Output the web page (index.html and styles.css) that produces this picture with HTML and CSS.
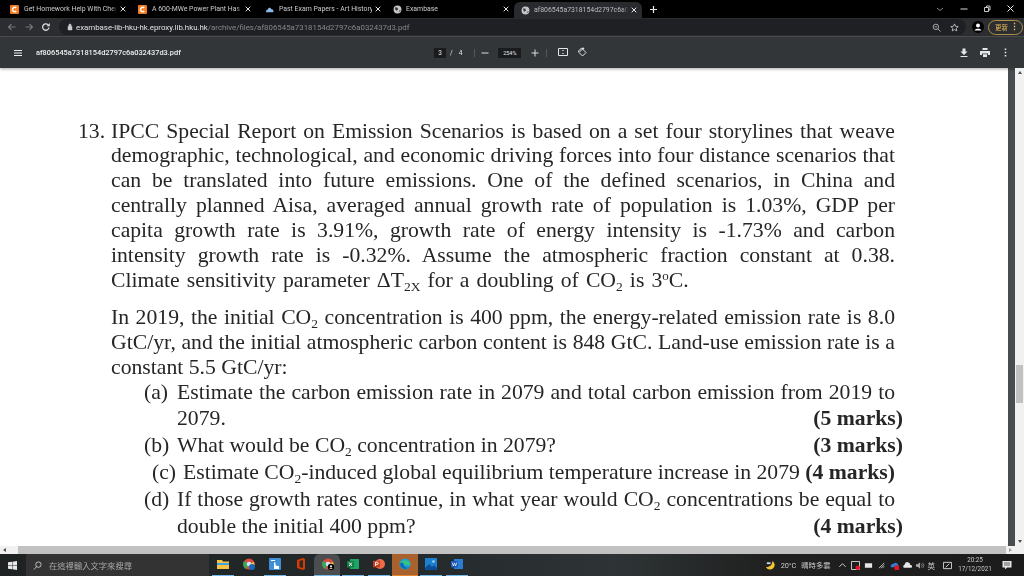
FILE: index.html
```html
<!DOCTYPE html>
<html lang="en">
<head>
<meta charset="utf-8">
<title>PDF</title>
<link rel="stylesheet" href="styles.css">
</head>
<body>
<div class="tabs">
  <div class="tab t1"><svg class="fav" viewBox="0 0 8 8"><rect width="8" height="8" rx="1" fill="#f47a20"/><path d="M5.600 2.600A2 2 0 1 0 5.600 5.400" fill="none" stroke="#fff" stroke-width="1.300"/></svg><span class="tab-title">Get Homework Help With Chegg</span><svg class="x" viewBox="0 0 6 6"><path d="M.7.700l4.600 4.600M5.300.700L.7 5.300" stroke="#e4e6e9" stroke-width="1"/></svg></div>
  <div class="tab t2"><svg class="fav" viewBox="0 0 8 8"><rect width="8" height="8" rx="1" fill="#f47a20"/><path d="M5.600 2.600A2 2 0 1 0 5.600 5.400" fill="none" stroke="#fff" stroke-width="1.300"/></svg><span class="tab-title">A 600-MWe Power Plant Has An</span><svg class="x" viewBox="0 0 6 6"><path d="M.7.700l4.600 4.600M5.300.700L.7 5.300" stroke="#e4e6e9" stroke-width="1"/></svg></div>
  <div class="tab t3"><svg class="fav" viewBox="0 0 8 8"><path d="M1 6.500h6.400C8 5 7 3.600 5.800 3.800 5 1.800 2.800 2 2.500 4 1.300 4 .6 5.300 1 6.500z" fill="#8ab9e8"/></svg><span class="tab-title">Past Exam Papers - Art History</span><svg class="x" viewBox="0 0 6 6"><path d="M.7.700l4.600 4.600M5.300.700L.7 5.300" stroke="#e4e6e9" stroke-width="1"/></svg></div>
  <div class="tab t4"><svg class="fav" viewBox="0 0 8 8"><circle cx="4" cy="4" r="3.500" fill="#c4c7c9"/><path d="M2 2l2 .5.500 1.500-1.500 1L2 4zM5 5.500l1.500-1V6z" fill="#333"/></svg><span class="tab-title">Exambase</span><svg class="x" viewBox="0 0 6 6"><path d="M.7.700l4.600 4.600M5.300.700L.7 5.300" stroke="#e4e6e9" stroke-width="1"/></svg></div>
  <div class="tab active"><svg class="fav" viewBox="0 0 8 8"><circle cx="4" cy="4" r="3.500" fill="#c4c7c9"/><path d="M2 2l2 .5.500 1.500-1.500 1L2 4zM5 5.500l1.500-1V6z" fill="#444"/></svg><span class="tab-title">af806545a7318154d2797c6a032437d3</span><svg class="x" viewBox="0 0 6 6"><path d="M.7.700l4.600 4.600M5.300.700L.7 5.300" stroke="#e4e6e9" stroke-width="1"/></svg></div>
  <svg class="plus" viewBox="0 0 7 7"><path d="M3.500 0v7M0 3.500h7" stroke="#e8eaed" stroke-width="1.200"/></svg>
  <div class="win">
    <svg viewBox="0 0 10 10"><path d="M2 4l3 2.500L8 4" fill="none" stroke="#8a8a8a"/></svg>
    <svg viewBox="0 0 10 10"><path d="M1.500 5h7" stroke="#ddd"/></svg>
    <svg viewBox="0 0 10 10"><path d="M2.500 3.500h4v4h-4zM4.500 3.500v-1.500h3.500v4H6.500" fill="none" stroke="#ddd" stroke-width=".9"/></svg>
    <svg viewBox="0 0 10 10"><path d="M1.500 1.500l6 6M7.500 1.500l-6 6" stroke="#eee"/></svg>
  </div>
</div>
<div class="omni">
  <svg class="nav" viewBox="0 0 10 10"><path d="M8.500 5h-7M4.500 2L1.500 5l3 3" fill="none" stroke="#74777b" stroke-width="1.100"/></svg>
  <svg class="nav" viewBox="0 0 10 10"><path d="M1.500 5h7M5.500 2l3 3-3 3" fill="none" stroke="#74777b" stroke-width="1.100"/></svg>
  <svg class="nav" viewBox="0 0 10 10"><path d="M8 5.500A3.200 3.200 0 1 1 7 2.700" fill="none" stroke="#dadce0" stroke-width="1.300"/><path d="M8.800 1v3.200H5.600z" fill="#dadce0"/></svg>
  <div class="addr">
    <svg class="lock" viewBox="0 0 8 8"><path d="M2 3.500h4V7H2zM2.800 3.500V2.200a1.200 1.200 0 0 1 2.400 0v1.300" fill="#c8cbcf" stroke="#c8cbcf" stroke-width=".5" fill-rule="evenodd"/></svg>
    <span class="url"><b>exambase-lib-hku-hk.eproxy.lib.hku.hk</b>/archive/files/af806545a7318154d2797c6a032437d3.pdf</span>
    <svg class="addr-ico" viewBox="0 0 10 10"><circle cx="4.300" cy="4.300" r="3" fill="none" stroke="#b5b8bb"/><path d="M6.500 6.500l3 3M3 4.300h2.600" stroke="#b5b8bb"/></svg>
    <svg class="addr-ico" viewBox="0 0 10 10"><path d="M5 1l1.200 2.700 2.900.3-2.200 1.900.7 2.900L5 7.300 2.400 8.800l.7-2.900L.9 4l2.900-.3z" fill="none" stroke="#c8cbcf" stroke-width=".9"/></svg>
  </div>
  <svg class="avatar" viewBox="0 0 12 12"><circle cx="6" cy="6" r="6" fill="#000"/><circle cx="6" cy="4.500" r="2" fill="#fff"/><path d="M2.500 9.500c.5-2.500 6.500-2.500 7 0z" fill="#fff"/></svg>
  <div class="update"><span>更新</span><i>⋮</i></div>
</div>
<div class="pdfbar">
  <svg class="menu" viewBox="0 0 8 6"><path d="M0 .5h8M0 3h8M0 5.500h8" stroke="#eee"/></svg>
  <span class="doc">af806545a7318154d2797c6a032437d3.pdf</span>
  <div class="center">
    <span class="box">3</span><span class="slash">/</span><span class="total">4</span><span class="sep"></span>
    <svg class="z minus" viewBox="0 0 8 8"><path d="M.5 4h7" stroke="#dcdde0"/></svg>
    <span class="box zoom">254%</span>
    <svg class="z" viewBox="0 0 8 8"><path d="M.5 4h7M4 .5v7" stroke="#dcdde0"/></svg>
    <span class="sep second-sep"></span>
    <svg class="fit" viewBox="0 0 11 9"><path d="M.5.500h9v7h-9z" fill="none" stroke="#e4e5e7"/><path d="M5 2v1M5 5v1" stroke="#e4e5e7" stroke-width="1.200"/></svg>
    <svg class="rot" viewBox="0 0 11 11"><path d="M5.500 2l3.500 3.500-3.500 3.500L2 5.500z" fill="none" stroke="#e4e5e7"/><path d="M1.500 5A4 4 0 0 1 6 1.500" fill="none" stroke="#e4e5e7"/><path d="M5.500 0v3l2-1.500z" fill="#e4e5e7"/></svg>
  </div>
  <div class="tools">
    <svg viewBox="0 0 9 9"><path d="M3 .5h3v3h2L4.500 7 1 3.500h2zM1 8h7v1H1z" fill="#e4e5e7"/></svg>
    <svg viewBox="0 0 10 9"><path d="M2.500 0h5v2h-5zM0 3h10v4H8V5.500H2V7H0zM3 6.200h4V9H3z" fill="#e4e5e7"/></svg>
    <svg viewBox="0 0 3 9"><path d="M.7.500h1.600v1.600H.7zM.7 3.700h1.600v1.600H.7zM.7 6.900h1.600v1.600H.7z" fill="#e4e5e7"/></svg>
  </div>
</div>
<div class="viewer">
  <main class="page">
    <div class="para first">
      <div class="line labelled wide"><span class="n">13.</span><span class="fill">IPCC Special Report on Emission Scenarios is based on a set four storylines that weave</span></div>
      <div class="line">demographic, technological, and economic driving forces into four distance scenarios that</div>
      <div class="line">can be translated into future emissions. One of the defined scenarios, in China and</div>
      <div class="line">centrally planned Aisa, averaged annual growth rate of population is 1.03%, GDP per</div>
      <div class="line">capita growth rate is 3.91%, growth rate of energy intensity is -1.73% and carbon</div>
      <div class="line">intensity growth rate is -0.32%. Assume the atmospheric fraction constant at 0.38.</div>
      <div class="line free spaced">Climate sensitivity parameter ΔT<sub>2X</sub> for a doubling of CO<sub>2</sub> is 3<sup>o</sup>C.</div>
    </div>
    <div class="para second">
      <div class="line">In 2019, the initial CO<sub>2</sub> concentration is 400 ppm, the energy-related emission rate is 8.0</div>
      <div class="line">GtC/yr, and the initial atmospheric carbon content is 848 GtC. Land-use emission rate is a</div>
      <div class="line free">constant 5.5 GtC/yr:</div>
    </div>
    <div class="items">
      <div class="line labelled item"><span class="n">(a)</span><span class="fill">Estimate the carbon emission rate in 2079 and total carbon emission from 2019 to</span></div>
      <div class="row cont"><span>2079.</span><b>(5 marks)</b></div>
      <div class="row item"><span class="n">(b)</span><span class="grow">What would be CO<sub>2</sub> concentration in 2079?</span><b>(3 marks)</b></div>
      <div class="row item tight"><span class="n">(c)</span><span class="grow">Estimate CO<sub>2</sub>-induced global equilibrium temperature increase in 2079 <b>(4 marks)</b></span></div>
      <div class="line labelled item"><span class="n">(d)</span><span class="fill">If those growth rates continue, in what year would CO<sub>2</sub> concentrations be equal to</span></div>
      <div class="row cont"><span>double the initial 400 ppm?</span><b>(4 marks)</b></div>
    </div>
  </main>
  <div class="gutter"></div>
  <div class="vscroll"><i class="up"></i><i class="thumb"></i><i class="down"></i></div>
</div>
<div class="hscroll"><i class="left"></i><i class="hthumb"></i><i class="right"></i></div>
<footer class="taskbar">
  <svg class="start" viewBox="0 0 10 10"><path d="M0 1.500l4.500-.7v4H0zM5 .7L10 0v4.800H5zM0 5.200h4.500v4L0 8.500zM5 5.200h5V10l-5-.7z" fill="#e8e8e8"/></svg>
  <div class="search"><svg viewBox="0 0 10 10"><circle cx="6" cy="4" r="3" fill="none" stroke="#ccc"/><path d="M4 6.200L1 9.500" stroke="#ccc"/></svg><span>在這裡輸入文字來搜尋</span></div>
  <div class="apps">
    <span class="app open"><svg viewBox="0 0 12 12"><path d="M0 2h5l1 1.500h6V11H0z" fill="#f5c242"/><path d="M0 5h12v2H0z" fill="#3ba4e8"/></svg></span>
    <span class="app"><svg viewBox="0 0 12 12"><circle cx="6" cy="6" r="5.500" fill="#dd4b3e"/><path d="M6 6l5-2a5.500 5.500 0 0 1-4 7.500z" fill="#f6c33b"/><path d="M6 6L3 11A5.500 5.500 0 0 1 1 3z" fill="#3aa757"/><circle cx="6" cy="6" r="2.300" fill="#cfe3fb"/><circle cx="9" cy="9" r="3" fill="#1668b8"/></svg></span>
    <span class="app open"><svg viewBox="0 0 12 12"><rect width="12" height="12" rx="1" fill="#3f8ed8"/><path d="M5 11V4.500h1.500v3L10 8v3zM2 2h4v1H2z" fill="#fff"/></svg></span>
    <span class="app"><svg viewBox="0 0 12 12"><path d="M2 2l6-2 2 1v10l-2 1-6-2z" fill="#d83b01"/><path d="M4.500 3L8 2v8L4.500 9z" fill="#2b2b2b"/></svg></span>
    <span class="app active"><svg viewBox="0 0 12 12"><circle cx="6" cy="6" r="5.500" fill="#dd4b3e"/><path d="M6 6l5-2a5.500 5.500 0 0 1-4 7.500z" fill="#f6c33b"/><path d="M6 6L3 11A5.500 5.500 0 0 1 1 3z" fill="#3aa757"/><circle cx="6" cy="6" r="2.300" fill="#cfe3fb"/><circle cx="9" cy="9" r="3.200" fill="#000"/><circle cx="9" cy="8.200" r="1" fill="#fff"/><path d="M7.300 10.800c.4-1.500 3-1.500 3.400 0z" fill="#fff"/></svg></span>
    <span class="app open"><svg viewBox="0 0 12 12"><rect x="3" y="1" width="9" height="10" fill="#21a366"/><rect y="3" width="7" height="6.500" fill="#107c41"/><path d="M2 4.500l3 3.500M5 4.500L2 8" stroke="#fff"/></svg></span>
    <span class="app open"><svg viewBox="0 0 12 12"><circle cx="7" cy="6" r="5" fill="#ed6c47"/><rect y="2.800" width="7" height="6.500" fill="#c43e1c"/><path d="M2.500 8V4.200h1.700a1 1 0 0 1 0 2.200H2.500" fill="none" stroke="#fff" stroke-width=".9"/></svg></span>
    <span class="app edge"><svg viewBox="0 0 12 12"><circle cx="6" cy="6" r="5.500" fill="#1b9de2"/><path d="M.8 6C1.500 1 11 1 11.500 7H5c0 2 3 3 5.500 2A5.500 5.500 0 0 1 .8 6z" fill="#33c481"/><path d="M.8 6C2 3.500 5 4 5 7c0 2 3 3 5.500 2A5.500 5.500 0 0 1 .8 6z" fill="#0f6cbd"/></svg></span>
    <span class="app open"><svg viewBox="0 0 12 12"><rect width="12" height="12" fill="#1c7fd0"/><path d="M0 10l4-4 3 3 2-2 3 3v2H0z" fill="#0c4f99"/><circle cx="8.500" cy="3.500" r="1.300" fill="#9fd3f7"/></svg></span>
    <span class="app open"><svg viewBox="0 0 12 12"><rect x="3" y="1" width="9" height="10" fill="#2b7cd3"/><rect y="3" width="7" height="6.500" fill="#185abd"/><path d="M1.200 4.500L2.400 8l1.100-3 1.100 3 1.200-3.500" fill="none" stroke="#fff" stroke-width=".7"/></svg></span>
  </div>
  <div class="tray">
    <svg class="moon" viewBox="0 0 12 12"><path d="M8 1a5 5 0 1 1-7 6.500C5 8 8 5.500 8 1z" fill="#f6c431"/><path d="M2 2.500h4v2H2z" fill="#cfd8e0"/></svg>
    <span class="temp">20°C</span><span class="wx">晴時多雲</span>
    <svg class="ti chev" viewBox="0 0 10 10"><path d="M1.500 6.500L5 3l3.500 3.500" fill="none" stroke="#ddd"/></svg>
    <svg class="ti" viewBox="0 0 10 10"><path d="M.5.500h9v9h-9z" fill="none" stroke="#ddd"/><circle cx="7.500" cy="7.500" r="2.500" fill="#e81123"/></svg>
    <svg class="ti" viewBox="0 0 10 10"><path d="M1 2.500h8v5H1z" fill="#e6e6e6"/></svg>
    <svg class="ti" viewBox="0 0 10 10"><path d="M2 8L8 2M4 8l4-4M6 8l2-2" stroke="#bbb"/></svg>
    <svg class="ti" viewBox="0 0 10 10"><path d="M1 7a3 3 0 0 1 3-4 3 3 0 0 1 5 3v1z" fill="#2f7fd6"/><rect x="5" y="5" width="5" height="5" fill="#e81123"/></svg>
    <svg class="ti" viewBox="0 0 10 10"><path d="M1 7.500a2 2 0 0 1 1-3.500 3 3 0 0 1 6 .5 1.500 1.500 0 0 1 1 3z" fill="#e6e6e6"/></svg>
    <svg class="ti" viewBox="0 0 10 10"><path d="M0 3.500h2L4.500 1.500v7L2 6.500H0z" fill="#aaa"/><path d="M6 3a3 3 0 0 1 0 4M7.500 2a4.500 4.500 0 0 1 0 6" fill="none" stroke="#aaa" stroke-width=".7"/></svg>
    <span class="lang">英</span>
    <svg class="ti screen" viewBox="0 0 10 10"><path d="M.5 1.500h9v7h-9z" fill="none" stroke="#ddd"/><path d="M3 7l4-4" stroke="#ddd"/></svg>
    <div class="clock"><span>20:25</span><span>17/12/2021</span></div>
    <svg class="notif" viewBox="0 0 10 10"><path d="M.5 1h9v6.500H5L3 9.500v-2H.500z" fill="#e6e6e6"/><path d="M2 3h6M2 5h6" stroke="#222" stroke-width=".7"/></svg>
  </div>
</footer>
</body>
</html>
```

FILE: styles.css
```css
* { box-sizing: border-box; }
html, body { margin: 0; height: 100%; overflow: hidden; }
body { width: 1024px; height: 576px; display: flex; flex-direction: column; font-family: Roboto, "Noto Sans CJK TC", sans-serif; background: #fff; }
svg { display: block; flex: none; }
.tabs, .omni, .pdfbar, .taskbar { filter: blur(.35px); }
.page { filter: blur(.25px); }

.tabs { height: 18px; background: #000; display: flex; align-items: center; color: #c9cbce; font-size: 6.900px; padding-left: 10px; }
.tab { height: 18px; display: flex; align-items: center; flex: none; padding-right: 5px; }
.tab-title { flex: 1; min-width: 0; overflow: hidden; white-space: nowrap; mask-image: linear-gradient(90deg, #000 94%, transparent); }
.fav { width: 9px; height: 9px; margin-right: 5px; }
.x { width: 6px; height: 6px; margin-left: 3px; }
.t1 { width: 121px; margin-right: 7px; }
.t2 { width: 118px; margin-right: 9px; }
.t3 { width: 120px; margin-right: 8px; padding-right: 4px; }
.t3 .tab-title, .t4 .tab-title { mask-image: none; }
.t4 { width: 120px; padding-right: 4px; }
.t4 .fav { margin-right: 4px; }
.active { width: 128px; margin-left: 1px; padding: 0 5px 0 7px; background: #292a2d; border-radius: 6px 6px 0 0; color: #b9bcc0; height: 16px; align-self: flex-end; }
.active .fav { margin-right: 4px; }
.plus { width: 7px; height: 7px; margin-left: 8px; }
.win { margin-left: auto; width: 81px; margin-right: 8px; display: flex; justify-content: space-between; }
.win svg { width: 10px; height: 10px; }

.omni { height: 19px; background: #2c2d30; display: flex; align-items: center; padding-left: 7px; border-bottom: 1px solid #4e5053; }
.nav { width: 10px; height: 10px; margin-right: 7px; }
.addr { flex: 1; height: 16px; border-radius: 8px; background: #1f2023; display: flex; align-items: center; padding: 0 7px 0 7px; margin-left: 1px; }
.lock { width: 8px; height: 8px; margin-right: 2px; }
.url { flex: 1; font-size: 7.850px; color: #85888c; white-space: nowrap; overflow: hidden; }
.url b { color: #dfe1e5; font-weight: 400; }
.addr-ico { width: 9px; height: 9px; margin-left: 9px; }
.avatar { width: 12px; height: 12px; margin-left: 6px; }
.update { width: 35px; height: 15px; margin: 0 1px 0 4px; border: 1px solid #b0904a; border-radius: 8px; color: #e7b95d; font-size: 6.500px; display: flex; align-items: center; justify-content: space-between; padding: 0 3px 0 6px; }
.update i { font-style: normal; font-size: 9px; font-weight: 700; }

.pdfbar { height: 31px; background: #323639; display: flex; align-items: center; padding: 0 14px 0 14px; color: #f1f1f1; box-shadow: 0 1px 3px rgba(0,0,0,.35); position: relative; }
.menu { width: 8px; height: 6px; margin-right: 14px; }
.doc { font-size: 7.400px; font-weight: 500; width: 398px; white-space: nowrap; }
.center { display: flex; align-items: center; font-size: 6.500px; color: #e8eaed; }
.box { background: #191b1c; width: 12px; height: 10px; line-height: 10px; text-align: center; }
.slash { margin-left: 4px; }
.total { margin-left: 6px; }
.sep { width: 1px; height: 8px; background: #55585b; margin: 0 6px 0 12px; }
.z { width: 8px; height: 8px; }
.zoom { width: 23px; margin: 0 10px 0 9px; font-size: 5.500px; }
.second-sep { margin: 0 11px 0 7px; }
.fit { width: 11px; height: 9px; margin-right: 8px; }
.rot { width: 11px; height: 11px; }
.tools { margin-left: auto; display: flex; align-items: center; gap: 11px; }
.tools svg { height: 9px; width: 10px; }
.tools svg:last-child { width: 3px; margin-left: 3px; margin-right: 3px; }

.viewer { height: 478px; display: flex; background: #fff; }
.page { width: 1008px; padding: 50.500px 113px 0 78px; font: 21.700px/24.860px "Liberation Serif", serif; color: #262626; }
.line { text-align: justify; text-align-last: justify; padding-left: 33px; white-space: nowrap; height: 24.860px; }
.line.free { text-align-last: left; }
.spaced { word-spacing: 1.650px; }
.labelled { display: flex; }
.labelled.wide { padding-left: 0; }
.n { width: 33px; text-align-last: left; flex: none; }
.fill { flex: 1; text-align-last: justify; }
.grow { flex: 1; }
sub { font-size: 13.500px; line-height: 0; vertical-align: -4px; }
sup { font-size: 13px; line-height: 0; vertical-align: 7px; }
.second { margin-top: 12.500px; }
.items { margin-top: -1px; }
.items .line, .row { height: 26.900px; line-height: 26.900px; }
.line.item, .row.item { padding-left: 66px; }
.row { display: flex; justify-content: space-between; white-space: nowrap; margin-right: -8px; }
.row.cont { padding-left: 99px; }
.row b { font-weight: 700; }
.row.item.tight { padding-left: 74px; }
.tight .n { width: 31px; }

.gutter { width: 7px; background: #474c4f; }
.vscroll { width: 9px; background: #f1f1f1; position: relative; display: flex; flex-direction: column; align-items: center; }
.thumb { position: absolute; top: 297px; left: 1px; width: 7px; height: 38px; background: #c1c1c1; }
.up, .down { position: absolute; width: 0; height: 0; border: 2px solid transparent; }
.up { top: 3px; border-bottom: 3px solid #505050; border-top: 0; }
.down { bottom: 3px; border-top: 3px solid #505050; border-bottom: 0; }

.hscroll { height: 8px; background: #f1f1f1; position: relative; }
.hthumb { position: absolute; left: 18px; right: 18px; top: 0; bottom: 0; background: #c1c1c1; }
.left, .right { position: absolute; top: 2px; width: 0; height: 0; border: 2px solid transparent; }
.left { left: 3px; border-right: 3px solid #505050; border-left: 0; }
.right { right: 12px; border-left: 3px solid #a0a0a0; border-right: 0; }

.taskbar { height: 22px; background: linear-gradient(90deg, #1e2223 0, #24292b 40%, #2e3436 60%, #202020 75%, #1b1b1b 100%); display: flex; align-items: stretch; color: #c9c9c9; }
.start { width: 9px; height: 9px; margin: 7px 8px 0 8px; }
.search { width: 183px; background: #333; display: flex; align-items: center; padding-left: 7px; font-size: 8.300px; color: #a8a8a8; margin-left: 1px; }
.search svg { width: 9px; height: 9px; margin-right: 7px; }
.apps { display: flex; margin-left: 1px; }
.app { width: 22px; margin: 0 2px; height: 22px; display: flex; align-items: center; justify-content: center; border-bottom: 1px solid transparent; padding-bottom: 1px; }
.app svg { width: 12px; height: 12px; }
.app.open { border-bottom-color: #76b9ed; }
.app.active { width: 26px; margin: 0; background: #4b4d4f; border-bottom-color: #76b9ed; }
.app.edge { width: 26px; margin: 0; background: #a9622e; border-bottom-color: #e8862e; }
.tray { margin-left: auto; display: flex; align-items: center; font-size: 7.300px; }
.moon { width: 11px; height: 11px; margin-right: 5px; }
.temp { margin-right: 5px; }
.wx { margin-right: 7px; }
.ti { width: 9px; height: 9px; margin-right: 4px; }
.lang { margin: 0 8px 0 -1px; font-size: 7.500px; }
.ti.screen { margin-right: 5px; }
.clock { display: flex; flex-direction: column; align-items: center; line-height: 9px; font-size: 6.300px; width: 36px; margin-right: 9px; }
.notif { width: 10px; height: 10px; margin-right: 12px; }
```
